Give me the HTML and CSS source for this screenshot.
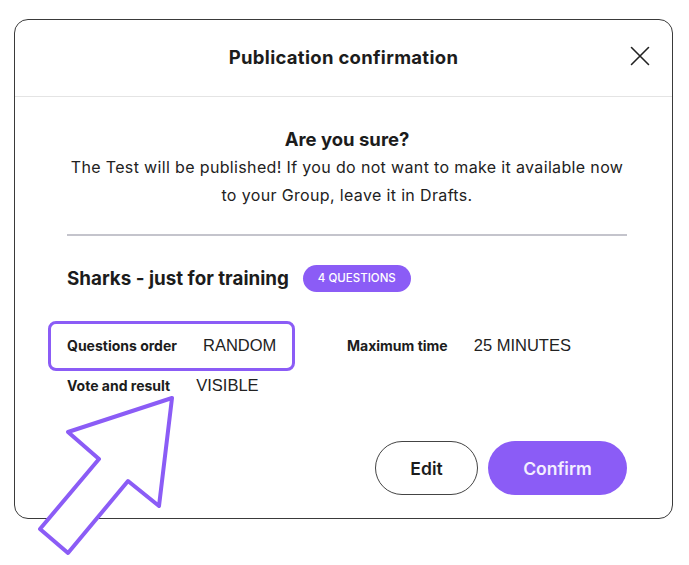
FILE: index.html
```html
<!DOCTYPE html>
<html lang="en">
<head>
  <meta charset="UTF-8">
  <meta name="viewport" content="width=device-width, initial-scale=1.0">
  <link rel="stylesheet" href="styles.css">
  <title>Publication confirmation</title>
</head>
<body>
  <div class="modal">
    <div class="modal-header">
      <h1>Publication confirmation</h1>
      <button class="close" type="button" aria-label="Close">
        <svg width="20" height="20" viewBox="0 0 20 20">
          <path d="M1.5 1.5 L18.5 18.5 M18.5 1.5 L1.5 18.5" stroke="#222" stroke-width="1.6" fill="none" stroke-linecap="round"/>
        </svg>
      </button>
    </div>
    <div class="modal-body">
      <div class="intro">
        <h2>Are you sure?</h2>
        <p>The Test will be published! If you do not want to make it available now<br>to your Group, leave it in Drafts.</p>
      </div>
      <hr class="divider">
      <div class="test-title">
        <h3>Sharks - just for training</h3>
        <span class="badge">4 QUESTIONS</span>
      </div>
      <div class="details">
        <div class="detail highlight">
          <span class="label">Questions order</span>
          <span class="value">RANDOM</span>
        </div>
        <div class="detail">
          <span class="label">Maximum time</span>
          <span class="value">25 MINUTES</span>
        </div>
        <div class="detail">
          <span class="label">Vote and result</span>
          <span class="value">VISIBLE</span>
        </div>
      </div>
      <div class="actions">
        <button class="btn btn-outline" type="button">Edit</button>
        <button class="btn btn-primary" type="button">Confirm</button>
      </div>
    </div>
  </div>

  <svg class="pointer" width="160" height="180" viewBox="0 0 160 180">
    <polygon points="152,20 48,54 79,81 20,151 48,175 108,103 139,128"
      fill="#fff" stroke="#8b5cf6" stroke-width="4" stroke-linejoin="round"/>
  </svg>
</body>
</html>
```

FILE: styles.css
```css
body {
  margin: 0;
  padding: 19px 0 0 14px;
  background: #fff;
  font-family: Inter, "Noto Sans", Arial, sans-serif;
  color: #1c1c1c;
}

.modal {
  width: 657px;
  height: 498px;
  border: 1px solid #3a3a3a;
  border-radius: 14px;
  background: #fff;
}

.modal-header {
  height: 76px;
  border-bottom: 1px solid #e4e4e4;
  display: flex;
  align-items: center;
  justify-content: center;
  position: relative;
}

.modal-header h1 {
  margin: 0 0 2px;
  font-size: 18.5px;
  font-weight: 700;
  letter-spacing: 0.3px;
}

.close {
  position: absolute;
  right: 22px;
  top: 26px;
  border: none;
  background: none;
  padding: 0;
  width: 20px;
  height: 20px;
  cursor: pointer;
}

.modal-body {
  padding: 28px 45px 24px 52px;
}

.intro {
  text-align: center;
}

.intro h2 {
  margin: 0;
  font-size: 18.5px;
  line-height: 28px;
  font-weight: 700;
}

.intro p {
  margin: 0;
  font-size: 16px;
  line-height: 28px;
  letter-spacing: 0.35px;
  color: #222;
}

.divider {
  border: none;
  border-top: 2px solid #c4c4cc;
  margin: 25px 0 0;
}

.test-title {
  display: flex;
  align-items: center;
  gap: 14px;
  margin-top: 28px;
  height: 28px;
}

.test-title h3 {
  margin: 0;
  font-size: 18.8px;
  font-weight: 700;
}

.badge {
  background: #8b5cf6;
  color: #fff;
  font-size: 11.5px;
  font-weight: 500;
  height: 27px;
  line-height: 27px;
  padding: 0 15px;
  border-radius: 14px;
}

.details {
  display: grid;
  grid-template-columns: 280px auto;
  row-gap: 20px;
  margin-top: 43px;
}

.detail {
  display: flex;
  align-items: center;
  gap: 26px;
  height: 20px;
  position: relative;
}

.detail .label {
  font-size: 14px;
  font-weight: 700;
}

.detail .value {
  font-family: "Liberation Sans", Arial, sans-serif;
  font-size: 16.5px;
  color: #222;
}

.highlight::after {
  content: "";
  position: absolute;
  left: -19px;
  top: -14px;
  width: 247px;
  height: 50px;
  box-sizing: border-box;
  border: 3px solid #8b5cf6;
  border-radius: 8px;
}

.actions {
  display: flex;
  justify-content: flex-end;
  gap: 10px;
  margin-top: 46px;
}

.btn {
  height: 54px;
  border-radius: 27px;
  font-family: inherit;
  font-size: 17.5px;
  font-weight: 600;
  cursor: pointer;
}

.btn-outline {
  width: 103px;
  background: #fff;
  border: 1px solid #444;
  color: #1c1c1c;
}

.btn-primary {
  width: 139px;
  background: #8b5cf6;
  border: none;
  color: #f3eeff;
}

.pointer {
  position: absolute;
  left: 20px;
  top: 378px;
}
```
